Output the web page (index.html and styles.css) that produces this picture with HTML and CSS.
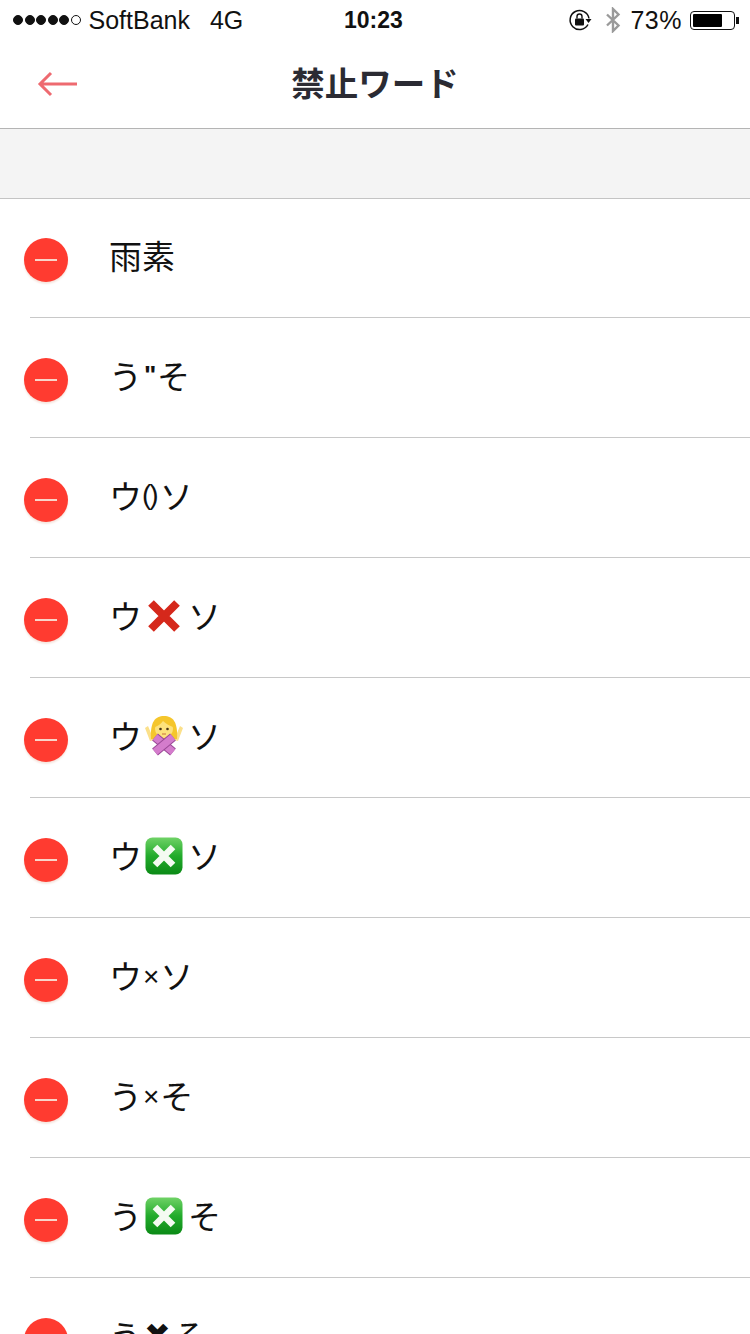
FILE: index.html
```html
<!DOCTYPE html>
<html lang="ja">
<head>
<meta charset="UTF-8">
<title>禁止ワード</title>
<link rel="stylesheet" href="styles.css">
</head>
<body>

<svg class="defs" width="0" height="0">
	<symbol id="green-x" viewBox="0 0 38 38">
		<defs>
			<linearGradient id="green-fill" x1="0" y1="0" x2="0" y2="1">
				<stop offset="0" stop-color="#6fd266"/>
				<stop offset="0.5" stop-color="#22ab2b"/>
				<stop offset="1" stop-color="#0b8a16"/>
			</linearGradient>
		</defs>
		<rect x="0.5" y="0.5" width="37" height="37" rx="7" fill="url(#green-fill)"/>
		<path d="M10 10 L28 28 M28 10 L10 28" stroke="#f4fbf2" stroke-width="6.5" fill="none"/>
	</symbol>
</svg>

<div class="status">
	<div class="status-left">
		<span class="dots"><i></i><i></i><i></i><i></i><i></i><i class="off"></i></span>
		<span class="carrier">SoftBank</span>
		<span class="net">4G</span>
	</div>
	<div class="status-time">10:23</div>
	<div class="status-right">
		<svg class="ico-lock" width="24" height="24" viewBox="0 0 24 24">
			<path d="M20 16.5 A9.5 9.5 0 1 1 21 10.5" fill="none" stroke="#111" stroke-width="1.5"/>
			<path d="M17.5 11 L23.5 11 L20.5 15 Z" fill="#111"/>
			<rect x="7" y="10.5" width="9" height="7" rx="1" fill="#111"/>
			<path d="M9 10.5 V8.5 A2.5 2.5 0 0 1 14 8.5 V10.5" fill="none" stroke="#111" stroke-width="1.4"/>
		</svg>
		<svg class="ico-bt" width="16" height="26" viewBox="0 0 16 26">
			<path d="M2 7.5 L13.5 18.5 L8 24 V2 L13.5 7.5 L2 18.5" fill="none" stroke="#9a9a9a" stroke-width="2.4"/>
		</svg>
		<span class="pct">73%</span>
		<span class="battery"><span class="battery-level"></span></span>
		<span class="battery-nib"></span>
	</div>
</div>

<div class="nav">
	<svg class="back" width="42" height="28" viewBox="0 0 42 28">
		<path d="M40 14 H3 M14 3 L3 14 L14 25" fill="none" stroke="#ee6a70" stroke-width="3"/>
	</svg>
	<h1 class="title">禁止ワード</h1>
</div>

<div class="band"></div>

<ul class="list">
	<li class="row"><span class="del"></span><span class="word">雨素</span></li>
	<li class="row"><span class="del"></span><span class="word">う<small class="mark quote">"</small>そ</span></li>
	<li class="row"><span class="del"></span><span class="word">ウ<small class="mark narrow">()</small>ソ</span></li>
	<li class="row"><span class="del"></span><span class="word">ウ
		<svg class="emoji" width="38" height="38" viewBox="0 0 38 38">
			<path d="M6 6 L32 32 M32 6 L6 32" stroke="#d5281b" stroke-width="8" fill="none"/>
		</svg>ソ</span></li>
	<li class="row"><span class="del"></span><span class="word">ウ
		<svg class="emoji" width="38" height="40" viewBox="0 0 38 40">
			<path d="M0 12 L3 10 L9 24 L5 25 Z M38 12 L35 10 L29 24 L33 25 Z" fill="#fbe08a"/>
			<path d="M6 23 C5 6 10 0 19 0 C28 0 33 6 32 23 Z" fill="#f5c62c"/>
			<ellipse cx="19" cy="13" rx="9" ry="9" fill="#fde27c"/>
			<path d="M10 11 C13 10 16 8 18 5 C21 8 25 10 28 11 C28 4 24 2 19 2 C14 2 10 4 10 11 Z" fill="#f5c62c"/>
			<circle cx="15.5" cy="13" r="1.3" fill="#4a3414"/>
			<circle cx="22.5" cy="13" r="1.3" fill="#4a3414"/>
			<path d="M17 18 H21" stroke="#c9703c" stroke-width="1"/>
			<path d="M10 21 L28 36" stroke="#9a4896" stroke-width="9" fill="none"/>
			<path d="M10 21 L28 36" stroke="#d47ccc" stroke-width="7" fill="none"/>
			<path d="M28 21 L10 36" stroke="#9a4896" stroke-width="9" fill="none"/>
			<path d="M28 21 L10 36" stroke="#d47ccc" stroke-width="7" fill="none"/>
		</svg>ソ</span></li>
	<li class="row"><span class="del"></span><span class="word">ウ
		<svg class="emoji" width="38" height="38"><use href="#green-x"/></svg>ソ</span></li>
	<li class="row"><span class="del"></span><span class="word">ウ<small class="mark times">×</small>ソ</span></li>
	<li class="row"><span class="del"></span><span class="word">う<small class="mark times">×</small>そ</span></li>
	<li class="row"><span class="del"></span><span class="word">う
		<svg class="emoji" width="38" height="38"><use href="#green-x"/></svg>そ</span></li>
	<li class="row"><span class="del"></span><span class="word">う<small class="mark heavy">✖</small>そ</span></li>
</ul>

</body>
</html>
```

FILE: styles.css
```css
* {box-sizing: border-box;}
html, body {margin: 0; padding: 0;}
body {width: 750px; height: 1334px; overflow: hidden; background: #fff; color: #111; font-family: "Liberation Sans", "Noto Sans CJK JP", sans-serif;}
.defs {position: absolute;}

/* status bar */
.status {display: flex; align-items: center; height: 40px; padding: 0 11px 0 13px; font-size: 25px;}
.status-left {flex: 1; display: flex; align-items: center;}
.status-right {flex: 1; display: flex; align-items: center; justify-content: flex-end;}
.status-time {width: 58px; margin-right: 6px; font-size: 23px; font-weight: bold; text-align: center;}
.dots {display: flex; gap: 1.5px; margin-right: 8px;}
.dots i {width: 10px; height: 10px; border-radius: 50%; background: #111; border: 1px solid #111;}
.dots i.off {background: #fff;}
.net {margin-left: 20px;}
.ico-bt {margin: 0 9px 0 13px;}
.pct {letter-spacing: 0.5px; margin-right: 8px;}
.battery {display: block; width: 45px; height: 19px; border: 1px solid #111; border-radius: 4px; padding: 2px;}
.battery-level {display: block; width: 29px; height: 13px; background: #000; border-radius: 1px;}
.battery-nib {display: block; width: 3px; height: 7px; background: #111; margin-left: 1px;}

/* nav */
.nav {position: relative; display: flex; align-items: center; justify-content: center; height: 89px; border-bottom: 1px solid #b4b4b4;}
.title {margin: 0 0 5px; font-family: "Noto Sans CJK JP", sans-serif; font-size: 33.5px; font-weight: bold; color: #2b2b33;}
.back {position: absolute; left: 37px; top: 30px;}

.band {height: 70px; background: #f4f4f4; border-bottom: 1px solid #c4c4c4;}

/* list */
.list {margin: -1px 0 0; padding: 0 0 0 30px; list-style: none;}
.row {display: flex; align-items: center; height: 120px; border-bottom: 1px solid #c8c8c8;}
.del {position: relative; flex: none; width: 44px; height: 44px; margin: 5px 0 0 -6px; border-radius: 50%; background: #ff3b30; box-shadow: 0 2px 2px #f6e6df;}
.del::after {content: ""; position: absolute; left: 11px; top: 21px; width: 22px; height: 2px; background: #f8d4c8;}
.word {display: flex; align-items: center; margin: 0 0 5px 41px; font-family: "Noto Sans CJK JP", sans-serif; font-size: 33px; line-height: 48px; color: #111;}
.mark {font-family: "Liberation Sans", sans-serif; font-size: 24px; line-height: 1;}
.mark.quote {font-size: 26px; margin: 0 3px 0 2px; width: 10px; font-weight: bold;}
.mark.narrow {letter-spacing: -2px; padding-right: 3px; font-size: 28px;}
.mark.times {font-size: 28px; margin: 4px 1px 0;}
.mark.heavy {font-family: "DejaVu Sans", sans-serif; font-size: 32px; margin: 0 2px;}
.emoji {flex: none; margin: 2px 5px 0 3px;}
```
